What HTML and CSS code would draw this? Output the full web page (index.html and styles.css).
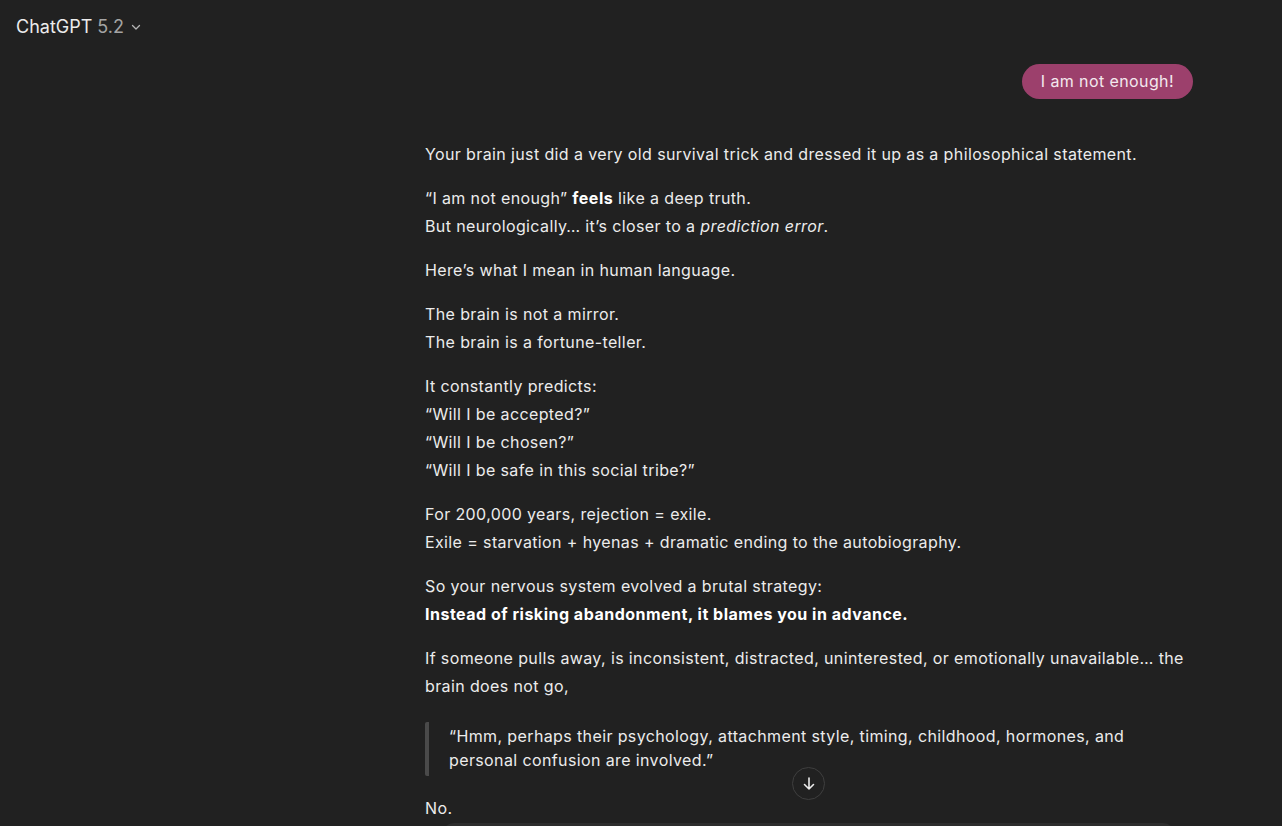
FILE: index.html
```html
<!DOCTYPE html>
<html lang="en">
<head>
<meta charset="utf-8">
<title>ChatGPT</title>
<link rel="stylesheet" href="styles.css">
</head>
<body>
<div class="app">
  <header class="topbar">
    <button class="model-btn">
      <span class="model-name">ChatGPT</span>
      <span class="model-ver">5.2</span>
      <svg class="chev" width="12" height="12" viewBox="0 0 12 12" fill="none"><path d="M2.5 4.5 6 8l3.5-3.5" stroke="#b4b4b4" stroke-width="1.3" stroke-linecap="round" stroke-linejoin="round"/></svg>
    </button>
  </header>
  <main class="main">
    <div class="thread">
      <div class="user-row">
        <div class="user-bubble">I am not enough!</div>
      </div>
      <div class="assistant">
        <p>Your brain just did a very old survival trick and dressed it up as a philosophical statement.</p>
        <p>“I am not enough” <strong>feels</strong> like a deep truth.<br>But neurologically… it’s closer to a <em>prediction error</em>.</p>
        <p>Here’s what I mean in human language.</p>
        <p>The brain is not a mirror.<br>The brain is a fortune-teller.</p>
        <p>It constantly predicts:<br>“Will I be accepted?”<br>“Will I be chosen?”<br>“Will I be safe in this social tribe?”</p>
        <p>For 200,000 years, rejection = exile.<br>Exile = starvation + hyenas + dramatic ending to the autobiography.</p>
        <p>So your nervous system evolved a brutal strategy:<br><strong>Instead of risking abandonment, it blames you in advance.</strong></p>
        <p>If someone pulls away, is inconsistent, distracted, uninterested, or emotionally unavailable… the brain does not go,</p>
        <blockquote>“Hmm, perhaps their psychology, attachment style, timing, childhood, hormones, and personal confusion are involved.”</blockquote>
        <p class="no">No.</p>
        <div class="next-block"></div>
      </div>
    </div>
    <button class="scroll-down" aria-label="Scroll down">
      <svg width="18" height="18" viewBox="0 0 18 18" fill="none"><path d="M9 3v11M4.5 9.5 9 14l4.5-4.5" stroke="#ececec" stroke-width="1.6" stroke-linecap="round" stroke-linejoin="round"/></svg>
    </button>
  </main>
</div>
</body>
</html>
```

FILE: styles.css
```css
html, body {
  margin: 0;
  padding: 0;
  height: 100%;
  background: #212121;
  overflow: hidden;
}
body {
  font-family: Inter, "Open Sans", sans-serif;
  color: #ececec;
}
.app {
  height: 826px;
  display: flex;
  flex-direction: column;
  position: relative;
}
.topbar {
  height: 52px;
  flex-shrink: 0;
  display: flex;
  align-items: center;
  padding-left: 8px;
}
.model-btn {
  display: flex;
  align-items: center;
  gap: 5px;
  background: none;
  border: none;
  padding: 0 8px;
  font-family: inherit;
  font-size: 18px;
  color: #ececec;
  cursor: pointer;
}
.model-ver {
  color: #a4a4a4;
}
.chev {
  margin-left: 1px;
  margin-top: 2px;
}
.main {
  flex: 1;
  position: relative;
  display: flex;
  justify-content: flex-start;
  padding-left: 425px;
}
.thread {
  width: 768px;
}
.user-row {
  display: flex;
  justify-content: flex-end;
  padding-top: 12px;
}
.user-bubble {
  background: #9c406c;
  color: #f3e9ee;
  border-radius: 18px;
  padding: 0 19px;
  height: 35px;
  line-height: 35px;
  font-size: 16px;
  letter-spacing: 0.4px;
}
.assistant {
  padding-top: 41px;
  font-size: 16px;
  line-height: 28px;
  letter-spacing: 0.38px;
}
.assistant p {
  margin: 0 0 16px 0;
}
.assistant strong {
  font-weight: 700;
  color: #ffffff;
  letter-spacing: 0.5px;
}
.assistant em {
  font-style: italic;
}
blockquote {
  margin: 22px 0 18px 0;
  padding: 2px 0 4px 20px;
  border-left: 4px solid #4a4a4a;
  border-radius: 2px;
  line-height: 24px;
}
.no {
  margin-top: 0;
}
.next-block {
  margin-left: 17px;
  margin-right: 18px;
  height: 40px;
  background: #2d2d2d;
  border-radius: 12px 12px 0 0;
  margin-top: -15px;
}
.scroll-down {
  position: absolute;
  left: 792px;
  top: 715px;
  width: 33px;
  height: 33px;
  border-radius: 50%;
  background: #212121;
  border: 1px solid #3f3f3f;
  display: flex;
  align-items: center;
  justify-content: center;
  padding: 0;
}
```
